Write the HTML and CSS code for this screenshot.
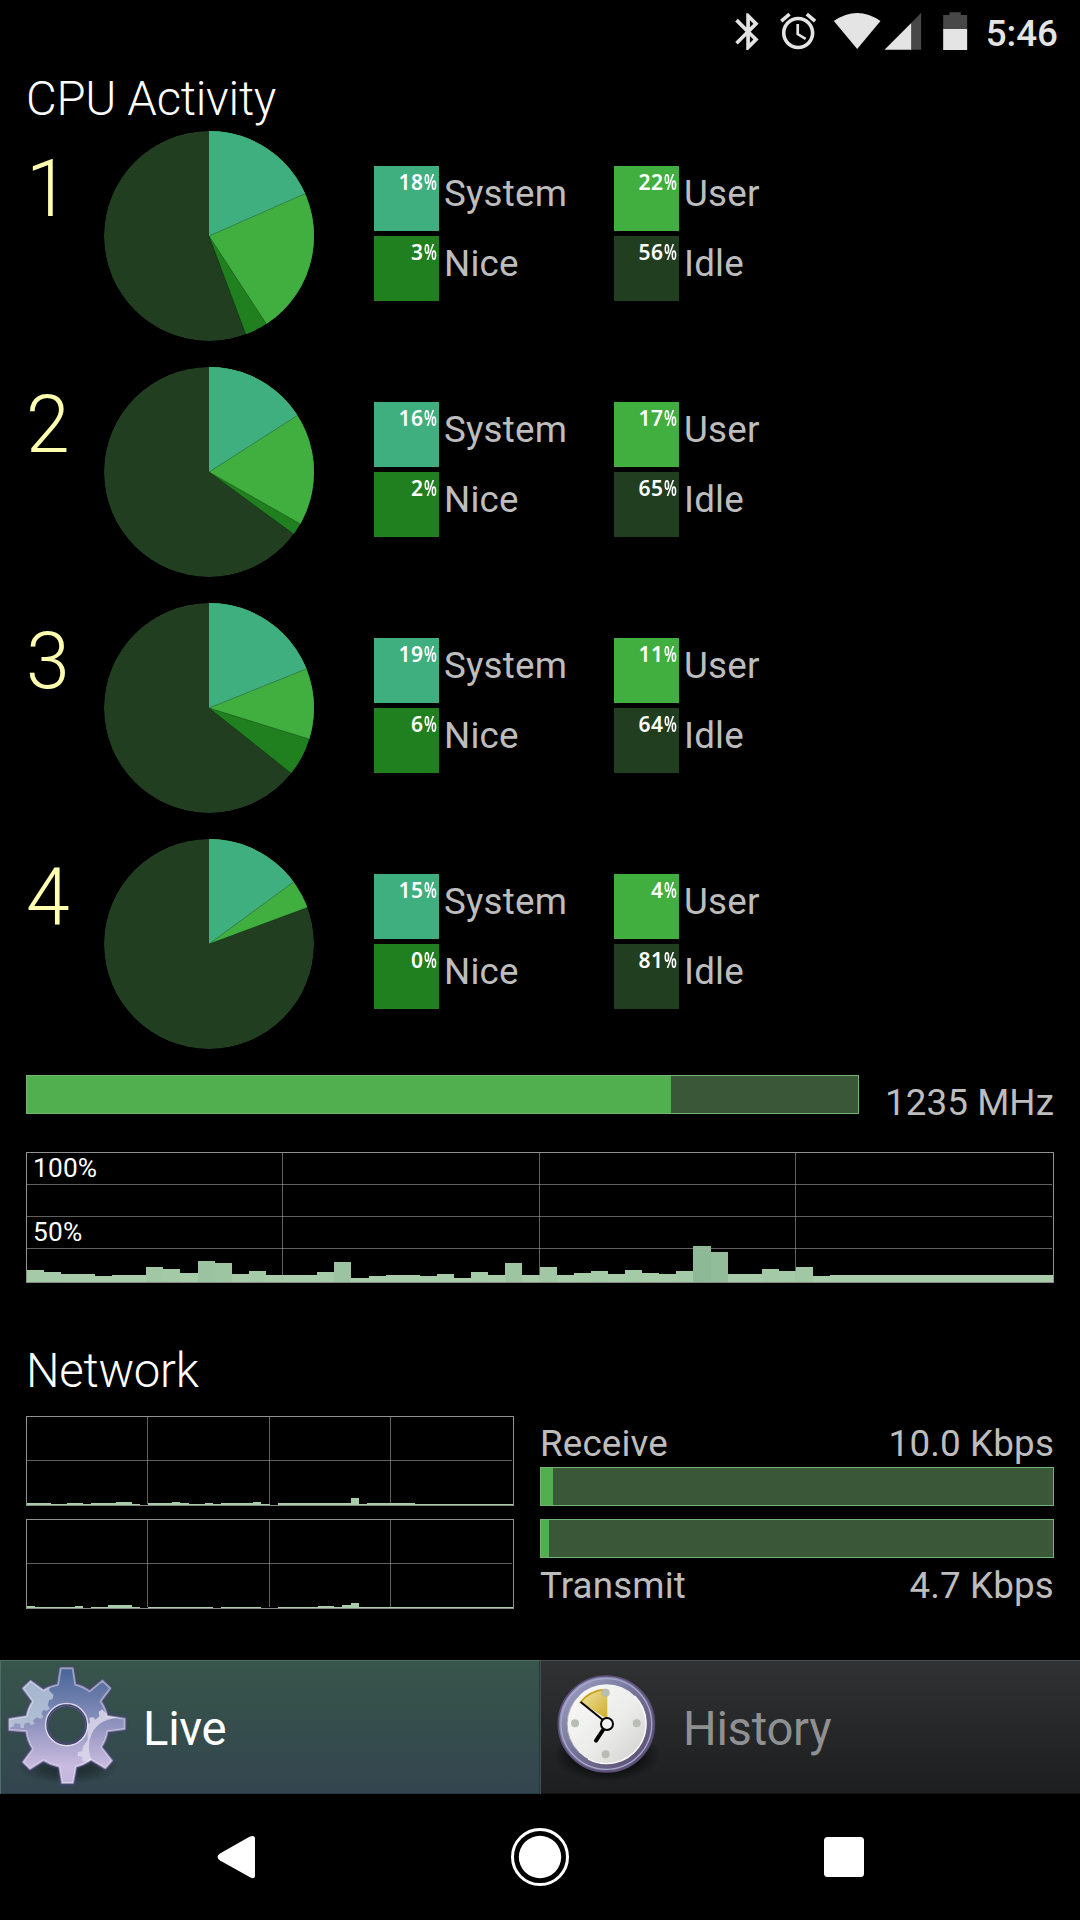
FILE: index.html
```html
<!DOCTYPE html>
<html lang="en">
<head>
<meta charset="utf-8">
<title>CPU Activity</title>
<link rel="stylesheet" href="styles.css">
</head>
<body>
<div class="screen">
  <header class="status">
    <svg class="status-icons" viewBox="0 0 830 210" width="277" height="70">
      <g fill="#e4e4e4">
        <path transform="translate(77.500 28.800) scale(5.520)" d="M17.71 7.71L12 2h-1v7.59L6.41 5 5 6.41 10.59 12 5 17.59 6.41 19 11 14.41V22h1l5.71-5.710L13.410 12l4.300-4.290zM13 5.830l1.880 1.880L13 9.590V5.830zm1.880 10.460L13 18.170v-3.760l1.880 1.880z"/>
        <path transform="translate(229 28.500) scale(5.420)" d="M22 5.720l-4.600-3.860-1.290 1.530 4.600 3.860L22 5.720zM7.880 3.390L6.600 1.860 2 5.710l1.290 1.530 4.590-3.850zM12.500 8H11v6l4.750 2.850.75-1.230-4-2.370V8zM12 4c-4.970 0-9 4.030-9 9s4.020 9 9 9c4.970 0 9-4.030 9-9s-4.030-9-9-9zm0 16c-3.870 0-7-3.130-7-7s3.130-7 7-7 7 3.130 7 7-3.130 7-7 7z"/>
        <path d="M401 63Q471 15 541 63L471 147z"/>
        <path d="M553 149L634 68V149z"/>
        <path d="M729 86H801V150H729z"/>
      </g>
      <path fill="#474747" d="M634 68L663 38V149H634zM729 86V45H748V37H782V45H801V86z"/>
    </svg>
    <span class="clock">5:46</span>
  </header>

  <main class="content">
    <h1 class="title">CPU Activity</h1>
    <section class="cores">
      <article class="core">
        <div class="core-number">1</div>
        <svg class="pie" viewBox="-315 -315 630 630">
          <circle class="idle" r="315"/>
          <path class="nice" d="M0 0V-500H600V600H224.500z"/>
          <path class="user" d="M0 0V-500H600V600H392z"/>
          <path class="system" d="M0 0V-500H600V-264z"/>
          <path class="seam" d="M0 0L288-127M0 0L172 263.500M0 0L110.500 295"/>
        </svg>
        <dl class="legend">
          <dt class="swatch sw-system">18<i>%</i></dt><dd>System</dd><dt class="swatch sw-user">22<i>%</i></dt><dd>User</dd>
          <dt class="swatch sw-nice">3<i>%</i></dt><dd>Nice</dd><dt class="swatch sw-idle">56<i>%</i></dt><dd>Idle</dd>
        </dl>
      </article>
      <article class="core">
        <div class="core-number">2</div>
        <svg class="pie" viewBox="-315 -315 630 630">
          <circle class="idle" r="315"/>
          <path class="nice" d="M0 0V-500H600V440z"/>
          <path class="user" d="M0 0V-500H600V341z"/>
          <path class="system" d="M0 0V-500H600V-384z"/>
          <path class="seam" d="M0 0L264-169M0 0L272.500 155M0 0L253.500 186"/>
        </svg>
        <dl class="legend">
          <dt class="swatch sw-system">16<i>%</i></dt><dd>System</dd><dt class="swatch sw-user">17<i>%</i></dt><dd>User</dd>
          <dt class="swatch sw-nice">2<i>%</i></dt><dd>Nice</dd><dt class="swatch sw-idle">65<i>%</i></dt><dd>Idle</dd>
        </dl>
      </article>
      <article class="core">
        <div class="core-number">3</div>
        <svg class="pie" viewBox="-315 -315 630 630">
          <circle class="idle" r="315"/>
          <path class="nice" d="M0 0V-500H600V477z"/>
          <path class="user" d="M0 0V-500H600V186z"/>
          <path class="system" d="M0 0V-500H600V-241z"/>
          <path class="seam" d="M0 0L291.500-117M0 0L299.500 93M0 0L245.500 195"/>
        </svg>
        <dl class="legend">
          <dt class="swatch sw-system">19<i>%</i></dt><dd>System</dd><dt class="swatch sw-user">11<i>%</i></dt><dd>User</dd>
          <dt class="swatch sw-nice">6<i>%</i></dt><dd>Nice</dd><dt class="swatch sw-idle">64<i>%</i></dt><dd>Idle</dd>
        </dl>
      </article>
      <article class="core">
        <div class="core-number">4</div>
        <svg class="pie" viewBox="-315 -315 630 630">
          <circle class="idle" r="315"/>
          <path class="user" d="M0 0V-500H600V-223z"/>
          <path class="system" d="M0 0V-500H600V-440z"/>
          <path class="seam" d="M0 0L253.500-186M0 0L293.500-109"/>
        </svg>
        <dl class="legend">
          <dt class="swatch sw-system">15<i>%</i></dt><dd>System</dd><dt class="swatch sw-user">4<i>%</i></dt><dd>User</dd>
          <dt class="swatch sw-nice">0<i>%</i></dt><dd>Nice</dd><dt class="swatch sw-idle">81<i>%</i></dt><dd>Idle</dd>
        </dl>
      </article>
    </section>

    <section class="frequency">
      <div class="meter"><div class="fill" style="width:644px"></div></div>
      <span class="value">1235 MHz</span>
    </section>

    <section class="cpu-chart">
      <svg class="chart" id="cpu" width="1028" height="131">
        <text class="axis" x="7" y="25">100%</text>
        <text class="axis" x="7" y="89">50%</text>
      </svg>
    </section>

    <h2 class="title title-network">Network</h2>
    <section class="network">
      <div class="net-charts">
        <svg class="chart" id="rx" width="488" height="90"></svg>
        <svg class="chart" id="tx" width="488" height="90"></svg>
      </div>
      <div class="net-meters">
        <div class="net-label"><span>Receive</span><span>10.0 Kbps</span></div>
        <div class="meter"><div class="fill" style="width:12px"></div></div>
        <div class="meter"><div class="fill" style="width:8px"></div></div>
        <div class="net-label"><span>Transmit</span><span>4.7 Kbps</span></div>
      </div>
    </section>
  </main>

  <nav class="tabs">
    <div class="tab tab-live">
      <svg class="tab-icon" viewBox="0 30 420 402">
        <defs>
          <linearGradient id="gear" x1="0" y1="0" x2="0" y2="1">
            <stop offset="0" stop-color="#48659b"/><stop offset=".3" stop-color="#7180ad"/><stop offset=".6" stop-color="#a29fc8"/><stop offset=".85" stop-color="#c9bbe0"/><stop offset="1" stop-color="#c3b6dc"/>
          </linearGradient>
          <radialGradient id="shadow"><stop offset="0" stop-color="#142020" stop-opacity=".75"/><stop offset=".5" stop-color="#142020" stop-opacity=".5"/><stop offset="1" stop-color="#142020" stop-opacity="0"/></radialGradient>
          <filter id="soft" x="-10%" y="-10%" width="120%" height="120%"><feGaussianBlur stdDeviation="3"/></filter>
          <path id="gear-shape" d="M182 55H218L226 104Q250 109 269 124L307 92L331 115L302 154Q317 175 321 198L374 206V237L322 244Q319 268 304 291L336 332L316 355L273 329Q250 345 228 350L219 399H186L178 350Q152 345 130 331L90 357L69 336L98 297Q82 272 79 244L28 240V207L80 199Q84 175 98 154L69 115L92 93L130 121Q150 108 174 104zM200 165A60 60 0 1 0 200 285A60 60 0 1 0 200 165z"/>
          <clipPath id="gear-clip"><use href="#gear-shape" clip-rule="evenodd"/></clipPath>
        </defs>
        <ellipse cx="205" cy="350" rx="155" ry="52" fill="url(#shadow)"/>
        <use href="#gear-shape" fill="none" stroke="#4d4480" stroke-width="10" filter="url(#soft)"/>
        <use href="#gear-shape" fill="url(#gear)" fill-rule="evenodd"/>
        <g clip-path="url(#gear-clip)">
          <path fill="#b9c8d9" fill-opacity=".8" d="M20 80H150L148 122L160 134L158 148L148 150L143 165L150 176L140 182L130 180L124 190L130 202L122 207L110 202L99 211L104 222L92 226L87 217L73 221L72 234H62L60 223L45 220L40 230L20 235z"/>
          <path fill="#dfdced" fill-opacity=".8" d="M380 203Q300 200 276 250Q257 290 276 335L248 334L246 320L233 318L234 306L247 304L249 290L263 270L262 225L270 217L268 203L280 202L286 209L298 199L296 186L306 178L318 190L325 180L380 190z"/>
        </g>
        <use href="#gear-shape" fill="none" stroke="#fff" stroke-opacity=".42" stroke-width="6" stroke-linejoin="round"/>
        <circle cx="200" cy="224" r="63" fill="none" stroke="#e2def0" stroke-opacity=".9" stroke-width="5"/>
        <circle cx="200" cy="224" r="59" fill="none" stroke="#3f4564" stroke-width="4"/>
      </svg>
      <span class="tab-label">Live</span>
    </div>
    <div class="tab tab-history">
      <svg class="tab-icon" viewBox="31 30 420 402">
        <defs>
          <linearGradient id="rim" x1="0" y1="0" x2="1" y2="1"><stop offset="0" stop-color="#a2a7cb"/><stop offset=".45" stop-color="#77759b"/><stop offset="1" stop-color="#55496a"/></linearGradient>
          <linearGradient id="face" x1="0" y1="0" x2="1" y2="1"><stop offset="0" stop-color="#fafafa"/><stop offset=".55" stop-color="#ececeb"/><stop offset="1" stop-color="#cececb"/></linearGradient>
          <linearGradient id="wedge" x1="0" y1="0" x2="1" y2="1"><stop offset="0" stop-color="#efe4a8"/><stop offset="1" stop-color="#d0ac25"/></linearGradient>
          <radialGradient id="shade"><stop offset="0" stop-color="#000" stop-opacity=".7"/><stop offset=".65" stop-color="#000" stop-opacity=".5"/><stop offset="1" stop-color="#000" stop-opacity="0"/></radialGradient>
        </defs>
        <ellipse cx="232" cy="315" rx="160" ry="80" fill="url(#shade)"/>
        <circle cx="230" cy="222" r="144" fill="url(#rim)" stroke="#5d4f78" stroke-width="5"/>
        <circle cx="230" cy="222" r="136" fill="none" stroke="#a6a9cc" stroke-width="4"/>
        <circle cx="231" cy="222" r="119" fill="url(#face)"/>
        <path d="M150 135A119 119 0 0 0 147 306" fill="none" stroke="#a9a9ad" stroke-width="3"/>
        <path d="M315 138A119 119 0 0 1 175 327" fill="none" stroke="#fff" stroke-width="4"/>
        <path d="M233 208L153 157Q184 121 233 118z" fill="url(#wedge)"/>
        <path d="M150 159Q181 121 226 119" fill="none" stroke="#c7a21c" stroke-width="5"/>
        <g fill="#b8bdb3"><circle cx="228" cy="128" r="12"/><circle cx="136" cy="220" r="12"/><circle cx="321" cy="220" r="12"/><circle cx="228" cy="313" r="12"/></g>
        <path d="M153 156L219 209" stroke="#000" stroke-width="6"/>
        <path d="M222 237L199 272" stroke="#000" stroke-width="12" stroke-linecap="round"/>
        <circle cx="232" cy="222" r="18" fill="#f2f2f2" stroke="#000" stroke-width="6"/>
      </svg>
      <span class="tab-label">History</span>
    </div>
  </nav>

  <footer class="navbar">
    <svg width="38" height="44" viewBox="0 0 38 44"><path d="M3 18.500L32 2Q38-1 38 4V40Q38 45 33.500 42.500L3 25.500Q-2 22 3 18.500z" fill="#fff"/></svg>
    <svg width="58" height="58" viewBox="0 0 58 58"><circle cx="29" cy="29" r="27.500" fill="none" stroke="#fff" stroke-width="3"/><circle cx="29" cy="29" r="21.200" fill="#fff"/></svg>
    <svg width="40" height="40" viewBox="0 0 40 40"><rect width="40" height="40" rx="3.500" fill="#fff"/></svg>
  </footer>
</div>
<script src="charts.js"></script>
</body>
</html>
```
FILE: styles.css
```css
* { box-sizing: border-box; margin: 0; padding: 0; }
body { background: #000; font-family: Roboto, "Noto Sans", sans-serif; color: #bdbdbd; }
svg { display: block; flex: none; }
.screen { width: 1080px; height: 1920px; display: flex; flex-direction: column; overflow: hidden; }

.status { height: 63px; display: flex; justify-content: flex-end; padding-right: 22px; color: #e4e4e4; }
.status-icons { margin-right: 9px; }
.clock { font-size: 36.75px; font-weight: 500; line-height: 68px; }

.content { flex: 1; padding: 0 26px; }
.title { height: 68px; font-size: 47.25px; font-weight: 300; line-height: 73px; letter-spacing: -.25px; color: #fff; }
.cores { display: flex; flex-direction: column; gap: 26px; }
.core { display: flex; height: 210px; }
.core-number { width: 78px; font-size: 78.75px; font-weight: 300; line-height: 116px; color: #ffffb0; }
.pie { width: 210px; height: 210px; border-radius: 50%; }
.idle { fill: #213f20; }
.nice { fill: #207f1f; }
.user { fill: #40af3f; }
.system { fill: #40af80; }
.seam { fill: none; stroke: #000; stroke-opacity: .25; stroke-width: 3; }
.legend { display: grid; grid-template-columns: 65px 175px 65px 175px; grid-auto-rows: 65px; row-gap: 5px; padding: 35px 0 0 60px; font-size: 36.75px; line-height: 55px; letter-spacing: .2px; }
.legend dd { padding-left: 5px; }
.swatch { display: flex; justify-content: flex-end; padding-right: 3px; font: 600 21px/33px "Noto Sans", sans-serif; letter-spacing: .5px; color: #fff; }
/* Squeezes the percent sign into one digit's width. */
.swatch i { width: 12.5px; font-style: normal; letter-spacing: 0; transform: scaleX(.7); transform-origin: left; }
.sw-system { background: #40af80; }
.sw-user { background: #40af3f; }
.sw-nice { background: #207f1f; }
.sw-idle { background: #213f20; }

.frequency { display: flex; justify-content: space-between; margin-top: 26px; height: 39px; }
.frequency .meter { width: 833px; }
.value { font-size: 36.75px; line-height: 55px; letter-spacing: .1px; white-space: nowrap; }
.meter { height: 39px; background: #3a5837; border: 1px solid #72b272; }
.fill { height: 100%; background: #51af50; }

.cpu-chart { margin-top: 38px; }
.axis { font-size: 26.25px; letter-spacing: .2px; fill: #fff; }
.title-network { height: 76px; margin-top: 57px; line-height: 62px; }
.network { display: flex; gap: 26px; }
.net-charts { display: flex; flex-direction: column; gap: 13px; }
.net-meters { width: 514px; }
.net-meters .meter + .meter { margin-top: 13px; }
.net-label { height: 51px; display: flex; justify-content: space-between; font-size: 36.75px; line-height: 55px; letter-spacing: .15px; }

.tabs { display: flex; height: 134px; }
.tab { width: 540px; height: 134px; display: flex; font-size: 47.25px; line-height: 139px; letter-spacing: -.3px; }
.tab-icon { width: 140px; height: 134px; }
.tab-live { color: #fff; background: linear-gradient(#37554a, #33454f); box-shadow: inset 1px 1px #4d6d67, inset -1px -1px #1f3a45; }
.tab-history { color: #8e9092; background: linear-gradient(#303133, #1c1e20); box-shadow: inset 1px 1px #4b4c4e, inset 0 -1px #101112; }
.tab-label { padding-left: 3px; }

.navbar { height: 126px; display: flex; align-items: center; justify-content: space-between; padding: 0 216px 0 217px; }
```
FILE: charts.js
```js
// Samples are bar heights in pixels, oldest first; each chart holds 60 samples.
const cpu = [12,10,8,8,6,7,7,15,13,9,21,19,8,11,7,7,7,10,20,4,6,7,7,6,8,4,10,7,19,7,15,7,9,11,8,12,9,8,11,36,30,8,8,13,11,15,6];
const rx = [2,2,2,1,1,2,2,1,2,2,2,3,3,1,0,2,2,2,3,2,1,1,2,1,2,2,2,2,3,1,0,2,2,2,2,2,2,2,2,2,7,1,2,2,2,2,2,2];
const tx = [2,1,1,1,1,1,2,0,1,1,3,3,3,1,0,1,1,1,1,1,1,1,1,0,1,1,1,1,1,0,0,1,1,1,1,1,2,2,1,3,5];

function rect(svg, x, y, w, h, fill) {
  const r = document.createElementNS("http://www.w3.org/2000/svg", "rect");
  for (const [k, v] of Object.entries({ x, y, width: w, height: h, fill })) r.setAttribute(k, v);
  svg.appendChild(r);
}

function draw(id, samples, rest, columns, rows) {
  const svg = document.getElementById(id);
  const w = +svg.getAttribute("width"), h = +svg.getAttribute("height");
  const edge = i => 1 + Math.floor((w - 2) / 60 * i);
  for (let i = 0; i < 60; i++) {
    const v = samples[i] ?? rest;
    const t = Math.max(0, v - 7) / 29;
    const color = `rgb(${169 - 28 * t},${205 - 20 * t},${171 - 21 * t})`;
    rect(svg, edge(i), h - 1 - v, edge(i + 1) - edge(i), v, color);
  }
  for (const y of rows) rect(svg, 1, y, w - 3, 1, "rgba(175,175,175,.55)");
  for (const x of columns) rect(svg, x, 1, 1, h - 3, "rgba(175,175,175,.55)");
  rect(svg, 0, 0, w, 1, "#929292");
  rect(svg, 0, h - 1, w, 1, "#858985");
  rect(svg, 0, 0, 1, h, "#929292");
  rect(svg, w - 1, 0, 1, h, "#929292");
}

draw("cpu", cpu, 7, [256, 513, 769], [32, 64, 96]);
draw("rx", rx, 1, [121, 243, 364], [44]);
draw("tx", tx, 1, [121, 243, 364], [44]);
```
